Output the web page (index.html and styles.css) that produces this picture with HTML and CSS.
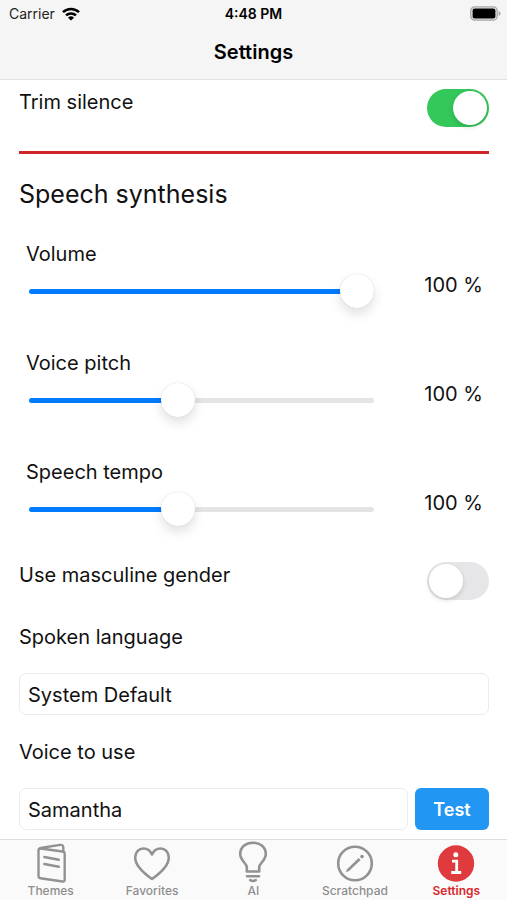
FILE: index.html
```html
<!DOCTYPE html>
<html lang="en">
<head>
<meta charset="utf-8">
<meta name="viewport" content="width=device-width, initial-scale=1">
<title>Settings</title>
<link rel="stylesheet" href="styles.css">
</head>
<body>
<header class="top">
  <div class="status">
    <div class="carrier">
      <span>Carrier</span>
      <svg width="18" height="14" viewBox="0 0 18 14" aria-hidden="true"><g fill="none" stroke="#000" stroke-width="2.5"><path d="M1 5.2a11.4 11.4 0 0 1 16 0"/><path d="M4 8.4a7.2 7.2 0 0 1 10 0"/></g><path d="M9 13.6 6 10.7a4.3 4.3 0 0 1 6 0z"/></svg>
    </div>
    <span class="time">4:48 PM</span>
    <svg class="battery" width="31" height="15" viewBox="0 0 31 15" aria-hidden="true"><rect x=".8" y=".8" width="26.4" height="13.4" rx="4" fill="#e6e6e6" stroke="#a6a6a6" stroke-width="1.3"/><rect x="2.6" y="2.6" width="22.8" height="9.8" rx="2"/><path d="M28.6 5v5q2-.8 2-2.500T28.600 5z" fill="#a6a6a6"/></svg>
  </div>
  <h1>Settings</h1>
</header>
<main>
  <div class="row">
    <label for="trim">Trim silence</label>
    <input class="switch" id="trim" type="checkbox" role="switch" checked>
  </div>
  <hr>
  <h2>Speech synthesis</h2>
  <div class="sliders">
    <div class="slider">
      <label for="volume">Volume</label>
      <input id="volume" type="range" min="0" max="100" value="100" style="--fill:100%">
      <output for="volume">100 %</output>
    </div>
    <div class="slider">
      <label for="pitch">Voice pitch</label>
      <input id="pitch" type="range" min="0" max="235" value="100" style="--fill:43%">
      <output for="pitch">100 %</output>
    </div>
    <div class="slider">
      <label for="tempo">Speech tempo</label>
      <input id="tempo" type="range" min="0" max="235" value="100" style="--fill:43%">
      <output for="tempo">100 %</output>
    </div>
  </div>
  <div class="row">
    <label for="gender">Use masculine gender</label>
    <input class="switch" id="gender" type="checkbox" role="switch">
  </div>
  <div class="field">
    <label for="language">Spoken language</label>
    <select id="language"><option>System Default</option></select>
  </div>
  <div class="field">
    <label for="voice">Voice to use</label>
    <div class="voice">
      <select id="voice"><option>Samantha</option></select>
      <button type="button">Test</button>
    </div>
  </div>
</main>
<nav class="tabs">
  <a href="#themes">
    <svg width="40" height="43" viewBox="0 0 40 43" aria-hidden="true"><g fill="none" stroke="#929292" stroke-width="2.4" stroke-linejoin="round" stroke-linecap="round"><path d="M9.500 8.500 31.500 11.500q2.200.3 2.200 2.300v25.700q0 2.300-2.200 2L9.500 38.300q-2-.3-2-2.300V10.500q0-2.200 2-2z"/><path d="M8.300 8.900Q9 8 11 7.700L29 4.900q3.300-.4 3.300 2.600V11.600"/><path d="m13.300 17 14.500 2.800M13.300 24l14.500 2.800"/></g></svg>
    <span>Themes</span>
  </a>
  <a href="#favorites">
    <svg width="40" height="43" viewBox="0 0 40 43" aria-hidden="true"><path d="M20 39C15 35.500 3.200 27 3.200 17.500 3.200 12 7 8.500 11.500 8.500c4 0 7 2.500 8.500 6 1.500-3.500 4.500-6 8.500-6 4.500 0 8.300 3.500 8.300 9C36.800 27 25 35.500 20 39z" fill="none" stroke="#929292" stroke-width="2.600" stroke-linejoin="round"/></svg>
    <span>Favorites</span>
  </a>
  <a href="#ai">
    <svg width="40" height="43" viewBox="0 0 40 43" aria-hidden="true"><g fill="none" stroke="#929292" stroke-width="2.600" stroke-linecap="round"><path d="M13.800 31.500v-4.500c0-3.500-6.600-6.500-6.600-13C7.200 7 12.700 2.700 20 2.700S32.800 7 32.800 14c0 6.500-6.600 9.500-6.600 13v4.500z" stroke-linejoin="round"/><path d="M14 36.200h12M17.200 40.200q2.800 1.600 5.600 0"/></g></svg>
    <span>AI</span>
  </a>
  <a href="#scratchpad">
    <svg width="40" height="43" viewBox="0 0 40 43" aria-hidden="true"><circle cx="20" cy="23.500" r="16.800" fill="none" stroke="#929292" stroke-width="2.600"/><path d="m10.800 32.300 1.300-3L23.600 17.900l2 2L14 31z" fill="#929292"/><circle cx="27" cy="16.600" r="1.800" fill="#929292"/></svg>
    <span>Scratchpad</span>
  </a>
  <a class="active" href="#settings" aria-current="page">
    <svg width="40" height="43" viewBox="0 0 40 43" aria-hidden="true"><circle cx="20" cy="23.500" r="18.200" fill="#df3b3e"/><circle cx="19.800" cy="14.800" r="2.500" fill="#fff"/><path d="M16 21.200h4.700V32M15.200 32.500h10" fill="none" stroke="#fff" stroke-width="2.800"/></svg>
    <span>Settings</span>
  </a>
</nav>
</body>
</html>
```
FILE: styles.css
```css
* {
  box-sizing: border-box;
}

body {
  margin: 0;
  min-height: 100vh;
  display: flex;
  flex-direction: column;
  background: #fff;
  color: #111;
  font: 20px/26px Inter, "Liberation Sans", sans-serif;
}

.top {
  background: #f5f5f5;
  border-bottom: 1px solid #e0e0e0;
  color: #000;
  padding-bottom: 14px;
}

.status {
  display: grid;
  grid-template-columns: 1fr auto 1fr;
  align-items: center;
  height: 27px;
  padding: 0 6px;
  font-size: 14px;
  line-height: 20px;
}

.carrier {
  display: flex;
  align-items: center;
  gap: 7px;
  padding-left: 3px;
  color: #222;
}

.time {
  font-weight: 600;
}

.battery {
  justify-self: end;
}

h1,
h2 {
  margin: 0;
}

h1 {
  padding-top: 12px;
  font-size: 20px;
  line-height: 26px;
  font-weight: 600;
  text-align: center;
}

main {
  flex: 1;
  padding: 9px 18px 9px 19px;
}

input,
select,
button {
  font: inherit;
  margin: 0;
}

.row {
  display: flex;
  justify-content: space-between;
  align-items: flex-start;
}

.switch {
  appearance: none;
  width: 62px;
  height: 38px;
  padding: 2px;
  border-radius: 19px;
  background: #e6e6e8;
  display: flex;
}

.switch::before {
  content: "";
  width: 34px;
  height: 34px;
  border-radius: 50%;
  background: #fff;
  box-shadow: 0 2px 5px rgb(0 0 0 / 14%);
}

.switch:checked {
  background: #34c75a;
  justify-content: flex-end;
}

hr {
  height: 3px;
  margin: 24px 0;
  border: 0;
  background: #cf2529;
}

h2 {
  font-size: 25px;
  line-height: 32px;
  font-weight: 400;
}

.sliders {
  display: grid;
  gap: 42px;
  padding: 31px 6px 36px 7px;
}

.slider {
  display: grid;
  grid-template-columns: 1fr auto;
  column-gap: 50px;
  row-gap: 7px;
}

.slider label {
  grid-column: 1 / 3;
}

.slider output {
  line-height: 22px;
}

input[type="range"] {
  appearance: none;
  min-width: 0;
  height: 34px;
  margin-left: 3px;
  background: none;
}

input[type="range"]::-webkit-slider-runnable-track {
  height: 5px;
  border-radius: 3px;
  background: linear-gradient(to right, #007aff var(--fill), #e4e4e4 var(--fill));
}

input[type="range"]::-webkit-slider-thumb {
  appearance: none;
  width: 34px;
  height: 34px;
  margin-top: -15px;
  border-radius: 50%;
  background: #fff;
  box-shadow: 0 0 1px rgb(0 0 0 / 20%), 0 6px 12px rgb(0 0 0 / 12%);
}

.field {
  display: grid;
  gap: 23px;
  margin-top: 24px;
}

select {
  appearance: none;
  width: 100%;
  height: 42px;
  padding: 2px 8px 0;
  border: 1px solid #ebebeb;
  border-radius: 7px;
  background: #fff;
  color: #111;
}

.voice {
  display: flex;
  gap: 7px;
}

.voice select {
  flex: 1;
}

button {
  width: 74px;
  padding: 2px 0 0;
  border: 0;
  border-radius: 6px;
  background: #2196f3;
  color: #fff;
  font-size: 18px;
  font-weight: 600;
}

.tabs {
  display: grid;
  grid-template-columns: repeat(5, 1fr);
  height: 61px;
  border-top: 1px solid #dedede;
  background: #fafafa;
}

.tabs a {
  display: flex;
  flex-direction: column;
  align-items: center;
  color: #8e8e8e;
  font-size: 12px;
  line-height: 16px;
  font-weight: 500;
  text-decoration: none;
}

.tabs .active {
  color: #d9282d;
  font-weight: 600;
}
```
